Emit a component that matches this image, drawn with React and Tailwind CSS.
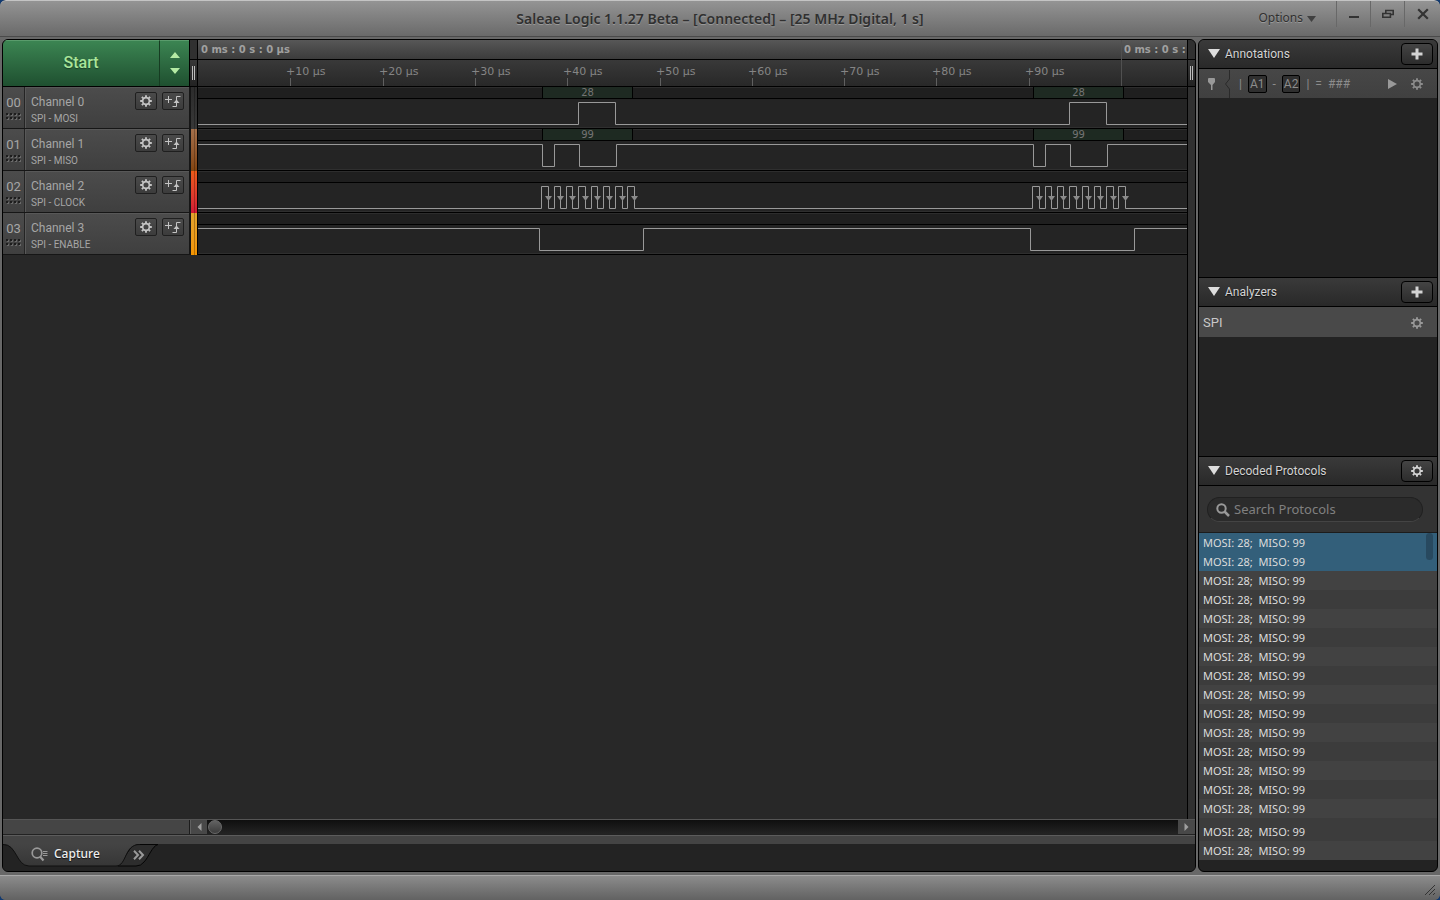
import {useState} from 'react';
import clsx from 'clsx';

const channels = [
    {
        id: '00',
        name: 'Channel 0',
        role: 'SPI - MOSI',
        value: '28',
        color: 'bg-linear-to-b from-[#2c2c2c] to-[#383838]',
        start: 'low',
        edges: [380, 417, 871, 908],
    },
    {
        id: '01',
        name: 'Channel 1',
        role: 'SPI - MISO',
        value: '99',
        color: 'bg-linear-to-b from-[#a5704a] to-[#84450f]',
        start: 'high',
        edges: [344, 356, 381, 418, 835, 847, 872, 909],
    },
    {
        id: '02',
        name: 'Channel 2',
        role: 'SPI - CLOCK',
        color: 'bg-linear-to-b from-[#ec5a17] to-[#d41634]',
        start: 'low',
        edges: [
            343, 350, 356, 362, 368, 374, 380, 387, 393, 399, 405, 411, 417, 424, 429, 436,
            834, 841, 847, 853, 859, 865, 871, 878, 884, 890, 896, 902, 908, 915, 920, 927,
        ],
        arrows: true,
    },
    {
        id: '03',
        name: 'Channel 3',
        role: 'SPI - ENABLE',
        color: 'bg-linear-to-b from-[#e2a32c] to-[#f59500]',
        start: 'high',
        edges: [341, 445, 832, 936],
    },
];

const byteStarts = [344, 835];

const ticks = [10, 20, 30, 40, 50, 60, 70, 80, 90];

const HIGH = 15;
const LOW = 37;

const buildPath = (edges, start) => {
    let level = start === 'high' ? HIGH : LOW;
    let d = `M-1 ${level}.5`;
    edges.forEach((x) => {
        level = level === HIGH ? LOW : HIGH;
        d += `H${x}.5V${level}.5`;
    });
    return d + 'H4000';
};

const GearIcon = ({className}) => (
    <svg viewBox="0 0 14 14" className={className} fill="none" stroke="currentColor" aria-hidden="true">
        <circle cx="7" cy="7" r="3.9" strokeWidth="1.9"/>
        <path
            d="M7 .2v2.400M7 11.400v2.400M.2 7h2.400M11.400 7h2.400M2.200 2.200l1.700 1.700M10.100 10.100l1.700 1.700M2.200 11.800l1.700-1.700M10.100 3.900l1.700-1.700"
            strokeWidth="2.200"
        />
    </svg>
);

const PlusIcon = () => (
    <svg viewBox="0 0 12 12" className="w-3 h-3" fill="currentColor" aria-hidden="true">
        <path d="M4.500 0.500h3v4h4v3h-4v4h-3v-4h-4v-3h4z"/>
    </svg>
);

const TriggerIcon = () => (
    <svg viewBox="0 0 16 12" className="w-4 h-3" fill="none" stroke="currentColor" aria-hidden="true">
        <path d="M0 4.500h7M3.500 1v7"/>
        <path d="M7.500 11.500h4V1.500h4"/>
        <path d="M8.500 8l3-3.500 3 3.500z" fill="currentColor" stroke="none"/>
    </svg>
);

const smallButton =
    'flex items-center justify-center w-[22px] h-[18px] rounded-xs border border-[#1f1f1f] bg-linear-to-b from-[#4a4a4a] to-[#3c3c3c] text-[#c4c4c4]';

const TitleBar = () => (
    <header
        className="flex items-stretch h-[37px] shrink-0 rounded-t-md border-t border-[#c4c4c4] border-b border-b-[#4a4a4a] bg-linear-to-b from-[#949494] to-[#6a6a6a] text-[#303030]">
        <div className="flex-1 basis-0"/>
        <h1 className="self-center font-['Noto_Sans'] text-sm font-semibold text-shadow-[0_1px_0_#9a9a9a]">
            Saleae Logic 1.1.27 Beta – [Connected] – [25 MHz Digital, 1 s]
        </h1>
        <div className="flex flex-1 basis-0 justify-end">
            <button
                className="flex items-center gap-1 pb-0.5 pr-5 font-['Noto_Sans'] text-xs text-shadow-[0_1px_0_#9a9a9a]">
                Options
                <svg viewBox="0 0 9 6" className="w-[9px] h-1.5 mt-0.5" aria-hidden="true">
                    <path d="M0 0h9L4.500 6z" fill="#404040"/>
                </svg>
            </button>
            <div className="flex h-[26px] text-[#333]">
                <button aria-label="Minimize"
                        className="flex items-center justify-center w-[34px] border-l border-[#686868]">
                    <svg viewBox="0 0 12 12" className="w-3 h-3" aria-hidden="true">
                        <path d="M1 8h10v2H1z" fill="currentColor"/>
                    </svg>
                </button>
                <button aria-label="Restore"
                        className="flex items-center justify-center w-[34px] border-l border-[#686868]">
                    <svg viewBox="0 0 12 10" className="w-3 h-2.5" fill="none" stroke="currentColor"
                         strokeWidth="1.600" aria-hidden="true">
                        <path d="M3.800 4V1.500h7.400v4H9"/>
                        <path d="M.8 4.500h7.600v3.700H.8z"/>
                    </svg>
                </button>
                <button aria-label="Close"
                        className="flex items-center justify-center w-9 border-l border-[#686868]">
                    <svg viewBox="0 0 12 12" className="w-3 h-3" stroke="currentColor" strokeWidth="2.200"
                         aria-hidden="true">
                        <path d="M1.200 1.200l9.600 9.600M10.800 1.200L1.200 10.800"/>
                    </svg>
                </button>
            </div>
        </div>
    </header>
);

const Grip = () => (
    <div className="flex items-center justify-center gap-px flex-1 bg-linear-to-b from-[#383838] to-[#222]">
        <span className="w-px h-3.5 bg-[#bbb]"/>
        <span className="w-px h-3.5 bg-[#bbb]"/>
    </div>
);

const StartButton = () => (
    <div className="flex w-[187px] shrink-0 border-r border-black bg-linear-to-b from-[#3c8653] to-[#1f5030]">
        <button
            className="flex-1 border-t border-[#5a9c6c] pb-0.5 font-['Roboto'] text-base font-medium text-[#a9e59a] text-shadow-[0_1px_1px_#1b3f26]">
            Start
        </button>
        <button
            aria-label="Change capture length"
            className="flex items-center justify-center w-[30px] border-l border-t border-l-[#163c22] border-t-[#5a9c6c] pb-0.5">
            <svg viewBox="0 0 10 22" className="w-2.5 h-[22px]" fill="#b4eaa4" aria-hidden="true">
                <path d="M5 0l5 6H0zM5 22l5-6H0z"/>
            </svg>
        </button>
    </div>
);

const Ruler = () => (
    <div className="relative flex flex-col flex-1 min-w-0 overflow-hidden font-['DejaVu_Sans']">
        <div
            className="h-5 border-b border-black bg-linear-to-b from-[#575757] to-[#3c3c3c] pl-[3px] text-[10px] leading-5 font-bold text-[#a0a0a0]">
            0 ms : 0 s : 0 µs
        </div>
        <div className="flex-1 bg-linear-to-b from-[#393939] to-[#282828]"/>
        {ticks.map((t) => (
            <div
                key={t}
                className="absolute bottom-0 h-5 text-[11px] leading-3 text-[#858585] whitespace-nowrap"
                style={{left: Math.round(t * 9.23) - 4}}
            >
                +{t} µs
                <span className="block w-px h-2 ml-1 bg-[#606060]"/>
            </div>
        ))}
        <div
            className="absolute inset-y-0 border-l border-[#505050] pl-0.5 text-[10px] leading-5 font-bold text-[#a0a0a0] whitespace-nowrap"
            style={{left: 923}}
        >
            0 ms : 0 s :
        </div>
    </div>
);

const ChannelRow = ({channel}) => (
    <div className="flex h-[42px]">
        <div
            className="flex w-[187px] shrink-0 border-b border-r border-[#161616] bg-linear-to-b from-[#4c4c4c] to-[#3f3f3f] font-['Roboto'] text-[#a6a6a6]">
            <div className="flex flex-col items-center w-[22px] border-r border-[#242424] pt-2">
                <span className="text-[13px] leading-4">{channel.id}</span>
                <svg viewBox="0 0 15 7" className="w-[15px] h-[7px] mt-0.5" aria-hidden="true">
                    {[0, 4, 8, 12].map((x) => (
                        <g key={x}>
                            <path d={`M${x} 0h2v2h-2zM${x} 4h2v2h-2z`} fill="#1d1d1d"/>
                            <path d={`M${x + 2} 1h1v2h-2v-1h1zM${x + 2} 5h1v2h-2v-1h1z`} fill="#6a6a6a"/>
                        </g>
                    ))}
                </svg>
            </div>
            <div className="flex-1 border-l border-t border-[#585858] pl-[5px] pt-1.5">
                <div className="text-xs leading-4">{channel.name}</div>
                <div className="pt-px text-[10px] leading-4">{channel.role}</div>
            </div>
            <div className="flex gap-[5px] border-t border-[#585858] pt-1 pr-[5px]">
                <button aria-label={`${channel.name} settings`} className={smallButton}>
                    <GearIcon className="w-3 h-3"/>
                </button>
                <button aria-label={`${channel.name} trigger`} className={smallButton}>
                    <TriggerIcon/>
                </button>
            </div>
        </div>
        <div className={clsx('w-2 shrink-0 border-x border-r-black border-l-[#161616]', channel.color)}>
            <div className="w-px h-full ml-[3px] bg-black/25"/>
        </div>
        <div className="relative flex flex-col flex-1 min-w-0 overflow-hidden border-b border-black">
            <div className="h-[11px] border-t border-[#2d2d2d] bg-[#1f1f1f]"/>
            <div className="flex-1 border-t border-black border-b border-b-[#2f2f2f] bg-[#242424]"/>
            {channel.value && byteStarts.map((x) => (
                <div
                    key={x}
                    className="absolute top-0 w-[91px] h-[11px] border-x border-black bg-[#1e2a22] text-center font-['DejaVu_Sans'] text-[10px] leading-3 text-[#747474]"
                    style={{left: x}}
                >
                    {channel.value}
                </div>
            ))}
            <svg className="absolute inset-0 w-full h-full" fill="none" aria-hidden="true">
                <path d={buildPath(channel.edges, channel.start)} stroke="#999"/>
                {channel.arrows && channel.edges.filter((x, i) => i % 2).map((x) => (
                    <path key={x} d={`M${x - 3} 25h7l-3.500 5z`} fill="#8a8a8a"/>
                ))}
            </svg>
        </div>
    </div>
);

const ScrollRow = () => (
    <div className="flex h-4 shrink-0 border-t border-b border-t-[#555] border-b-[#222] bg-[#454545]">
        <div className="w-[187px] shrink-0 border-r border-[#1c1c1c]"/>
        <button aria-label="Scroll left"
                className="flex items-center justify-center w-[17px] border-l border-[#606060] bg-[#484848]">
            <svg viewBox="0 0 5 8" className="w-[5px] h-2" fill="#a0a0a0" aria-hidden="true">
                <path d="M4.500 0v8L.5 4z"/>
            </svg>
        </button>
        <div className="flex-1 bg-linear-to-b from-[#0f0f0f] to-[#242424]">
            <div
                className="w-3.5 h-3.5 ml-px rounded-full border border-[#6a6a6a] bg-linear-to-b from-[#626262] to-[#3c3c3c]"/>
        </div>
        <button aria-label="Scroll right" className="flex items-center justify-center w-[17px] bg-[#484848]">
            <svg viewBox="0 0 5 8" className="w-[5px] h-2" fill="#a0a0a0" aria-hidden="true">
                <path d="M.5 0v8l4-4z"/>
            </svg>
        </button>
    </div>
);

const TabBar = () => (
    <nav className="shrink-0 h-9 bg-[#232323]">
        <div className="h-[9px] border-t border-[#5c5c5c] bg-[#444]"/>
        <div className="relative flex h-[22px]">
            <svg viewBox="0 0 160 23" className="absolute top-0 left-0 w-40 h-[23px]" aria-hidden="true">
                <defs>
                    <linearGradient id="tab" x1="0" y1="0" x2="0" y2="1">
                        <stop offset="0" stopColor="#444"/>
                        <stop offset="1" stopColor="#363636"/>
                    </linearGradient>
                </defs>
                <path d="M130 .5H155C149 2 146 13 141 18Q138 22 133 22H115z" fill="#2d2d2d" stroke="#050505"/>
                <path d="M0 0C14 0 13 22 26 22H113C124 22 121 0 137 0z" fill="url(#tab)"/>
                <path d="M0 .5C14 0 13 22 26 22H113C124 22 121 0 137 .5" fill="none" stroke="#101010"/>
            </svg>
            <button
                className="relative flex items-center gap-1.5 pb-0.5 pl-7 font-['Noto_Sans'] text-xs leading-4 font-medium text-[#eee] text-shadow-[0_1px_1px_#111]">
                <svg viewBox="0 0 17 15" className="w-[17px] h-[15px]" fill="none" stroke="#999"
                     aria-hidden="true">
                    <circle cx="6" cy="6" r="4.800" strokeWidth="1.700"/>
                    <path d="M9 9.500l3.500 4" strokeWidth="2.200"/>
                    <path d="M12 4.500h4.500M12 6.500h4.500M12 8.500h4.500"/>
                </svg>
                Capture
            </button>
            <button aria-label="More tabs" className="relative flex items-center w-10 ml-[33px] text-[#999]">
                <svg viewBox="0 0 12 10" className="w-3 h-2.5" fill="none" stroke="currentColor" strokeWidth="2"
                     aria-hidden="true">
                    <path d="M1 .8l4 4.200-4 4.200M6 .8l4 4.200-4 4.200"/>
                </svg>
            </button>
        </div>
    </nav>
);

const CapturePanel = () => (
    <main className="flex flex-col flex-1 min-w-0 rounded-md border border-black bg-[#282828] overflow-hidden">
        <div className="flex flex-1 min-h-0">
            <div className="flex flex-col flex-1 min-w-0">
                <div className="flex h-[47px] shrink-0 border-b border-black">
                    <StartButton/>
                    <div className="flex flex-col w-2 shrink-0 border-r border-black">
                        <div className="h-5 border-b border-black bg-[#303030]"/>
                        <Grip/>
                    </div>
                    <Ruler/>
                </div>
                {channels.map((c) => <ChannelRow key={c.id} channel={c}/>)}
            </div>
            <div className="flex flex-col w-2 shrink-0 border-l border-black bg-[#303030]">
                <div className="h-5 border-b border-black"/>
                <div className="flex h-[27px] border-b border-black">
                    <Grip/>
                </div>
            </div>
        </div>
        <ScrollRow/>
        <TabBar/>
    </main>
);

const SectionHeader = ({title, label, children}) => {
    const [open, setOpen] = useState(true);

    return (
        <div
            className="flex items-center justify-between h-[29px] shrink-0 border-b border-black bg-linear-to-b from-[#3a3a3a] to-[#292929] pl-[9px] pr-1 text-[#d4d4d4]">
            <button
                onClick={() => setOpen(!open)}
                aria-expanded={open}
                className="flex items-center gap-[5px] text-xs text-shadow-[0_1px_1px_#111]"
            >
                <svg viewBox="0 0 12 10" className="w-3 h-2.5" fill="#ddd" aria-hidden="true">
                    <path d="M0 0h12L6 9z"/>
                </svg>
                {title}
            </button>
            <button
                aria-label={label}
                className="flex items-center justify-center w-8 h-[22px] rounded-sm border border-black bg-linear-to-b from-[#444] to-[#2c2c2c]"
            >
                {children}
            </button>
        </div>
    );
};

const Marker = ({children}) => (
    <span className="rounded-xs border border-black bg-[#2f2f2f] px-px text-xs leading-4">{children}</span>
);

const Sidebar = () => {
    const rows = Array.from({length: 17}, (_, i) => i);

    return (
        <aside
            className="flex flex-col w-60 shrink-0 rounded-md border border-black bg-[#232323] overflow-hidden font-['Roboto']">
            <section className="h-[238px] shrink-0 border-b border-black">
                <SectionHeader title="Annotations" label="Add annotation"><PlusIcon/></SectionHeader>
                <div
                    className="flex items-center h-[29px] bg-linear-to-b from-[#474747] to-[#404040] pl-2 pr-3.5 text-[#8c8c8c]">
                    <svg viewBox="0 0 24 28" className="w-6 h-7" fill="none" aria-hidden="true">
                        <path d="M1.500 8h6l.5 1v3L5.500 15v5h-1.500v-5L1 12V9z" fill="#999"/>
                        <path d="M22.500 0v9l-4 5 4 5v9" stroke="#2a2a2a"/>
                    </svg>
                    <div className="flex flex-1 items-center gap-1.5 pl-2 text-xs">
                        <span>|</span>
                        <Marker>A1</Marker>
                        <span>-</span>
                        <Marker>A2</Marker>
                        <span>|</span>
                        <span>=</span>
                        <span>###</span>
                    </div>
                    <button aria-label="Go to annotation" className="mr-3.5">
                        <svg viewBox="0 0 9 10" className="w-[9px] h-2.5" fill="#999" aria-hidden="true">
                            <path d="M0 0l9 5-9 5z"/>
                        </svg>
                    </button>
                    <button aria-label="Annotation settings"><GearIcon className="w-3 h-3"/></button>
                </div>
            </section>

            <section className="h-[179px] shrink-0 border-b border-black">
                <SectionHeader title="Analyzers" label="Add analyzer"><PlusIcon/></SectionHeader>
                <div className="flex items-center justify-between h-[30px] bg-[#494949] pl-1 pt-px pr-3.5">
                    <span className="text-[13px] text-[#c8c8c8]">SPI</span>
                    <button aria-label="SPI settings" className="text-[#999]">
                        <GearIcon className="w-3 h-3"/>
                    </button>
                </div>
            </section>

            <section className="flex flex-col flex-1 min-h-0">
                <SectionHeader title="Decoded Protocols" label="Protocol settings">
                    <GearIcon className="w-3 h-3"/>
                </SectionHeader>
                <div className="shrink-0 bg-[#333] pl-2 pr-3.5 pt-[11px] pb-2.5">
                    <label
                        className="flex items-center gap-1 h-[25px] rounded-full border border-[#202020] border-b-[#444] bg-[#2b2b2b] pl-2 pr-3">
                        <svg viewBox="0 0 14 14" className="w-3.5 h-3.5 shrink-0" fill="none" stroke="#999"
                             aria-hidden="true">
                            <circle cx="5.500" cy="5.500" r="4.200" strokeWidth="2"/>
                            <path d="M8.500 8.500l4.500 4.500" strokeWidth="2.500"/>
                        </svg>
                        <input
                            type="text"
                            aria-label="Search Protocols"
                            placeholder="Search Protocols"
                            className="w-full min-w-0 bg-transparent font-['Noto_Sans'] text-[13px] text-gray-200 placeholder:text-[#808080] outline-none"
                        />
                    </label>
                </div>
                <div className="relative flex-1 min-h-0 overflow-hidden border-t border-[#1c1c1c] mb-[11px]">
                    <ul className="font-['Noto_Sans'] text-[11px] leading-[19px] text-[#dcdcdc]">
                        {rows.map((i) => (
                            <li
                                key={i}
                                className={clsx(
                                    'pl-1 whitespace-pre',
                                    i < 2 ? 'bg-[#335f7a]' : i % 2 ? 'bg-[#3c3c3c]' : 'bg-[#424242]',
                                    i === 15 && 'pt-1'
                                )}
                            >
                                {'MOSI: 28;  MISO: 99'}
                            </li>
                        ))}
                    </ul>
                    <div className="absolute top-0 right-1 w-[7px] h-[27px] rounded-sm bg-[#28495f]"/>
                </div>
            </section>
        </aside>
    );
};

const App = () => (
    <div className="h-screen bg-[#123a70]">
        <div className="flex flex-col h-full rounded-md bg-[#686868] overflow-hidden">
            <TitleBar/>
            <div className="flex flex-1 min-h-0 gap-0.5 px-0.5 pt-0.5 pb-[3px]">
                <CapturePanel/>
                <Sidebar/>
            </div>
            <footer
                className="flex items-end justify-end h-[25px] shrink-0 border-t border-[#a8a8a8] bg-linear-to-b from-[#8c8c8c] to-[#626262] p-1">
                <svg viewBox="0 0 12 12" className="w-3 h-3" stroke="#333" aria-hidden="true">
                    <path d="M1 11L11 1M5 11l6-6M9 11l2-2"/>
                </svg>
            </footer>
        </div>
    </div>
);

export default App;
